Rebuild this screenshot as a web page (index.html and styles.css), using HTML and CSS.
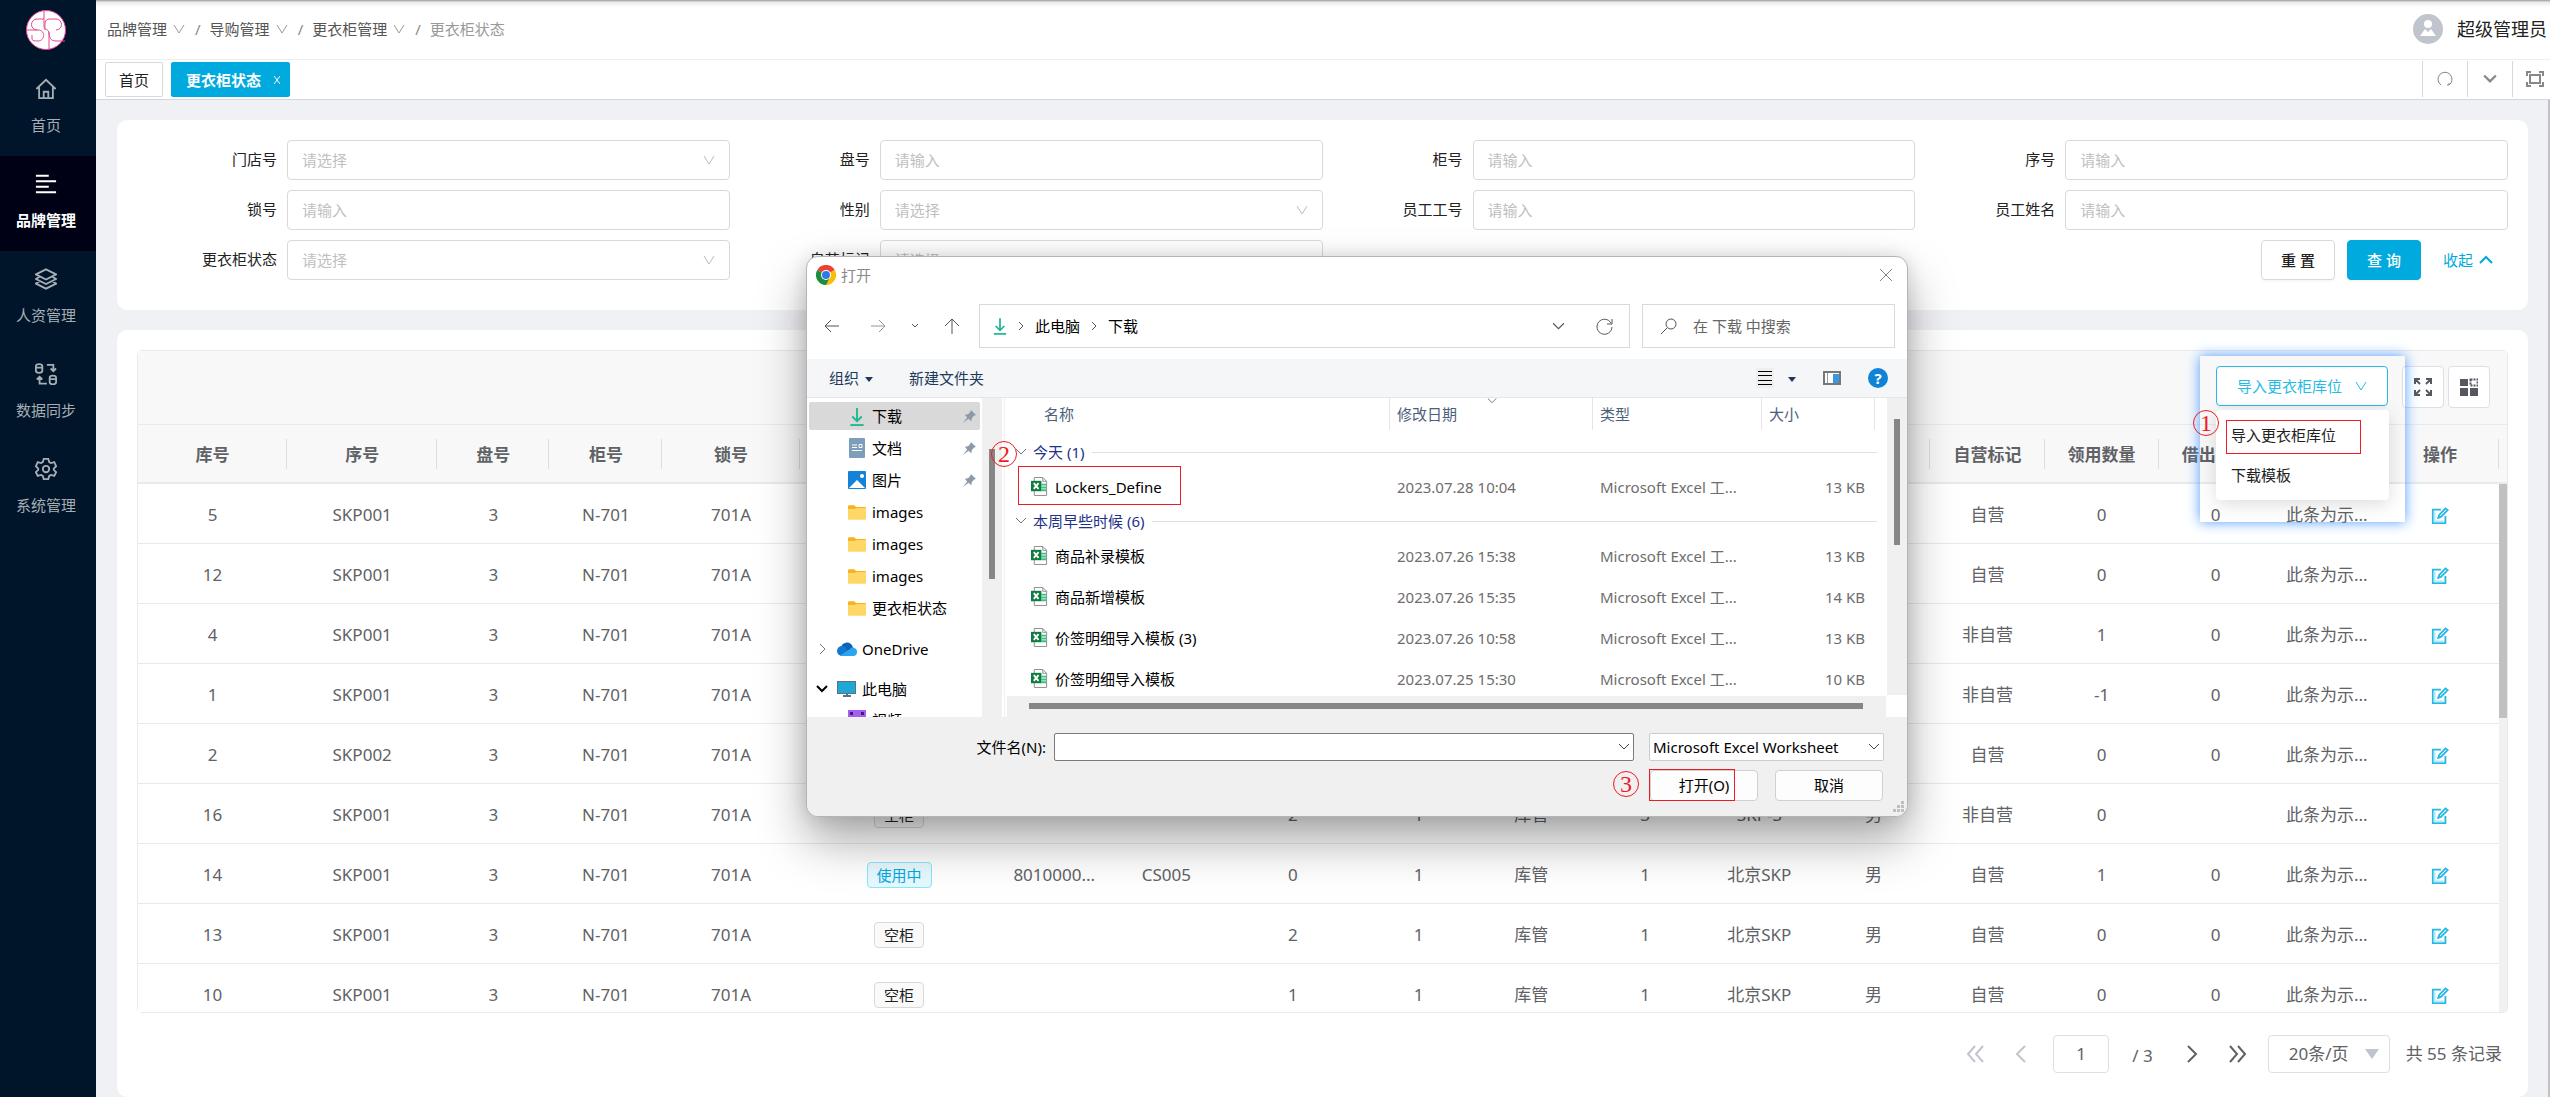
FILE: index.html
```html
<!DOCTYPE html>
<html lang="zh-CN">
<head>
  <meta charset="UTF-8" />
  <meta name="viewport" content="width=device-width, initial-scale=1.0" />
  <title>更衣柜状态</title>
  <link rel="stylesheet" href="styles.css">
</head>
<body>
  <!-- shared icons -->
  <svg class="sprite" aria-hidden="true">
    <symbol id="i-down" viewBox="0 0 12 12"><path d="M1 2l5 8 5-8" /></symbol>
    <symbol id="i-chev" viewBox="0 0 12 12"><path d="M1 3l5 5 5-5" /></symbol>
    <symbol id="i-right" viewBox="0 0 12 12"><path d="M4 1l5 5-5 5" /></symbol>
    <symbol id="i-edit" viewBox="0 0 20 20">
      <path d="M11 3H2v15h14v-8" /><path class="soft" d="M4 5v11h10" /><path d="M8 12l1-3 7-7.500 2.500 2-7.500 7.500z" />
    </symbol>
    <symbol id="i-pin" viewBox="0 0 14 14"><path d="M8.500 0L14 5.500l-2 .5-2.500 2.500-.5 3.500-3-2.700L0 14l4.500-6L2 5l3.500-.5L8 2z" /></symbol>
    <symbol id="i-download" viewBox="0 0 16 20"><path d="M8 1v14M3 10l5 5 5-5" /><path class="base" d="M1 19h14" /></symbol>
    <symbol id="i-folder" viewBox="0 0 20 16">
      <path fill="#f5b41f" d="M1 0h6l2 2h10a1 1 0 0 1 1 1v4H0V1a1 1 0 0 1 1-1z" />
      <path fill="#ffd766" d="M0 4h7l2-1h11v12a1 1 0 0 1-1 1H1a1 1 0 0 1-1-1z" />
    </symbol>
    <symbol id="i-excel" viewBox="0 0 18 20">
      <path fill="#fff" stroke="#8a8a8a" d="M3.500.5h9l4 4v15h-13z" /><path fill="none" stroke="#8a8a8a" d="M12.500.5v4h4" />
      <path stroke="#35c481" stroke-width="2" d="M11 8h5M11 11h5M11 14h5" />
      <path fill="#107c41" d="M0 4h11v11H0z" /><path stroke="#fff" stroke-width="2" d="M3 6.500l5 6M8 6.500l-5 6" />
    </symbol>
  </svg>

  <div class="app">
    <nav class="sidebar">
      <a class="logo" href="#">
        <svg width="40" height="40" viewBox="0 0 40 40" fill="none" stroke="#e2488c" stroke-width="1">
          <circle cx="20" cy="20" r="19.500" fill="#fff" />
          <path d="M18 0v16M18 9h-7a5 5 0 0 0 0 11M0 20h12c8 0 7 11 0 11s-6-1-6-6M19 20c0-6-1-11 5-11h6a5 5 0 0 1 0 11M18 16c0 5 5 2 5 8v16M23 22c0 6 2 9 7 9h9" />
        </svg>
      </a>
      <a class="menu-item" href="#">
        <svg viewBox="0 0 24 24"><path d="M1.500 12L12 2l10.500 10M4.500 10v12h15V10M9.500 22v-7h5v7" /></svg>
        <span>首页</span>
      </a>
      <a class="menu-item active" href="#">
        <svg viewBox="0 0 24 24"><path d="M1 3h14M1 9h22M1 15h14M1 21h22" /></svg>
        <span>品牌管理</span>
      </a>
      <a class="menu-item" href="#">
        <svg viewBox="0 0 24 24"><path d="M12 1.500L23 7l-11 5.500L1 7zM5 9.500L1 12l11 5.500L23 12l-4-2.500M5 14.500L1 17l11 5.500L23 17l-4-2.500" /></svg>
        <span>人资管理</span>
      </a>
      <a class="menu-item" href="#">
        <svg viewBox="0 0 24 24"><path d="M1 3.500c0-3 7-3 7 0v5c0 3-7 3-7 0zM1 5h7M16 16c0-3 7-3 7 0v5c0 3-7 3-7 0zM16 17.500h7M13 2h7v7M17 6l3 3 3-3M13 22.500H5V15M2 18l3-3 3 3" /></svg>
        <span>数据同步</span>
      </a>
      <a class="menu-item" href="#">
        <svg viewBox="0 0 24 24"><path d="M9.500 1h5l1 3.500 2 1 3.500-1L23 9l-2.500 2.500v1.500L23 15.500 21 19.500l-3.500-1-2 1-1 3.500h-5l-1-3.500-2-1-3.500 1L1 15.500 3.500 13v-1.500L1 9l2-4.500 3.500 1 2-1z" /><circle cx="12" cy="12" r="3.500" /></svg>
        <span>系统管理</span>
      </a>
    </nav>

    <div class="page">
      <header class="topbar">
        <div class="crumbs">
          <a href="#">品牌管理 <svg class="line"><use href="#i-down" /></svg></a><i>/</i>
          <a href="#">导购管理 <svg class="line"><use href="#i-down" /></svg></a><i>/</i>
          <a href="#">更衣柜管理 <svg class="line"><use href="#i-down" /></svg></a><i>/</i>
          <span>更衣柜状态</span>
        </div>
        <div class="user">
          <svg width="30" height="30" viewBox="0 0 30 30"><circle cx="15" cy="15" r="15" fill="#c0c4cc" /><circle cx="15" cy="10" r="4" fill="#fff" /><path fill="#fff" d="M7 22l5-7 3 3 3-3 5 7z" /></svg>
          <span>超级管理员</span>
        </div>
      </header>

      <div class="tabs">
        <a class="tab" href="#">首页</a>
        <a class="tab current" href="#">更衣柜状态 <svg class="line" viewBox="0 0 8 8"><path d="M1 0l6 8M7 0L1 8" /></svg></a>
        <div class="tab-tools">
          <button type="button" aria-label="刷新"><svg width="16" height="16" viewBox="0 0 16 16"><path d="M4 14a7 7 0 1 1 8 0v-2M12 14h-2" /></svg></button>
          <button type="button" aria-label="更多"><svg class="bold" width="14" height="14"><use href="#i-chev" /></svg></button>
          <button type="button" aria-label="全屏"><svg class="bold" width="18" height="16" viewBox="0 0 18 16"><path d="M1 5V1h4M13 1h4v4M17 11v4h-4M5 15H1v-4M4 4h10v8H4z" /></svg></button>
        </div>
      </div>

      <main class="content">
        <form class="card filters">
          <label for="store">门店号</label>
          <div class="field"><select id="store"><option>请选择</option></select><svg class="line"><use href="#i-down" /></svg></div>
          <label for="plate">盘号</label>
          <div class="field"><input id="plate" type="text" placeholder="请输入"></div>
          <label for="cabinet">柜号</label>
          <div class="field"><input id="cabinet" type="text" placeholder="请输入"></div>
          <label for="serial">序号</label>
          <div class="field"><input id="serial" type="text" placeholder="请输入"></div>

          <label for="lock">锁号</label>
          <div class="field"><input id="lock" type="text" placeholder="请输入"></div>
          <label for="sex">性别</label>
          <div class="field"><select id="sex"><option>请选择</option></select><svg class="line"><use href="#i-down" /></svg></div>
          <label for="empno">员工工号</label>
          <div class="field"><input id="empno" type="text" placeholder="请输入"></div>
          <label for="empname">员工姓名</label>
          <div class="field"><input id="empname" type="text" placeholder="请输入"></div>

          <label for="state">更衣柜状态</label>
          <div class="field"><select id="state"><option>请选择</option></select><svg class="line"><use href="#i-down" /></svg></div>
          <label for="self">自营标记</label>
          <div class="field"><select id="self"><option>请选择</option></select><svg class="line"><use href="#i-down" /></svg></div>
          <div class="actions">
            <button type="button" class="btn">重 置</button>
            <button type="button" class="btn primary">查 询</button>
            <a href="#">收起 <svg width="14" height="12" viewBox="0 0 14 12"><path d="M1 9l6-6 6 6" /></svg></a>
          </div>
        </form>

        <section class="card list">
          <div class="grid">
            <div class="toolbar">
              <div class="import">
                <button type="button" class="btn outline">导入更衣柜库位 <svg class="line"><use href="#i-down" /></svg></button>
                <div class="import-menu">
                  <a href="#">导入更衣柜库位</a>
                  <a href="#">下载模板</a>
                </div>
                <div class="spotlight"></div>
                <div class="mark import-mark"></div>
                <span class="step import-step">1</span>
              </div>
              <button type="button" class="tool" aria-label="最大化"><svg width="18" height="18" viewBox="0 0 18 18"><path fill="none" d="M1 6V1h5M1 1l5 5M12 1h5v5M17 1l-5 5M1 12v5h5M1 17l5-5M17 12v5h-5M17 17l-5-5" /></svg></button>
              <button type="button" class="tool" aria-label="列设置"><svg width="18" height="18" viewBox="0 0 18 18"><path stroke="none" fill="#55585e" d="M0 1h8v7H0zM0 10h8v8H0zM10 10h8v8h-8z" /><path fill="none" stroke-dasharray="2 1" d="M10.500 1.500h7v6h-7z" /></svg></button>
            </div>
            <div class="table-area">
              <table class="data">
                <colgroup id="cols"></colgroup>
                <thead><tr id="head"></tr></thead>
                <tbody id="rows"></tbody>
              </table>
              <div class="table-scroll"><div class="thumb"></div></div>
            </div>
          </div>
          <div class="pager">
            <button type="button" class="off" aria-label="首页"><svg width="18" height="18" viewBox="0 0 18 18"><path d="M9 1L2 9l7 8M17 1l-7 8 7 8" /></svg></button>
            <button type="button" class="off" aria-label="上一页"><svg width="18" height="18" viewBox="0 0 18 18"><path d="M13 1L5 9l8 8" /></svg></button>
            <input type="text" value="1" aria-label="页码">
            <span class="total">/ 3</span>
            <button type="button" aria-label="下一页"><svg width="18" height="18" viewBox="0 0 18 18"><path d="M5 1l8 8-8 8" /></svg></button>
            <button type="button" aria-label="末页"><svg width="18" height="18" viewBox="0 0 18 18"><path d="M1 1l7 8-7 8M9 1l7 8-7 8" /></svg></button>
            <div class="size"><select aria-label="每页条数"><option>20条/页</option></select><svg width="14" height="10" viewBox="0 0 14 10"><path d="M0 0h14L7 10z" /></svg></div>
            <span class="count">共 55 条记录</span>
          </div>
        </section>
        <div class="page-scroll"></div>
      </main>
    </div>
  </div>

  <div class="dialog" role="dialog" aria-label="打开">
    <div class="titlebar">
      <svg width="20" height="20" viewBox="0 0 20 20">
        <path fill="#ea4335" d="M10 10L1.300 5a10 10 0 0 1 17.400 0z" /><path fill="#fbbc05" d="M10 10l8.700-5A10 10 0 0 1 10 20z" /><path fill="#1e8e3e" d="M10 20A10 10 0 0 1 1.300 5L10 10l3 4z" />
        <circle cx="10" cy="10" r="5" fill="#fff" /><circle cx="10" cy="10" r="4" fill="#2a7bea" />
      </svg>
      <span>打开</span>
      <button type="button" aria-label="关闭"><svg width="12" height="12" viewBox="0 0 12 12"><path d="M0 0l12 12M12 0L0 12" /></svg></button>
    </div>

    <div class="navbar">
      <div class="arrows">
        <button type="button" class="back" aria-label="后退"><svg width="16" height="16" viewBox="0 0 16 16"><path d="M15 8H1M7 2L1 8l6 6" /></svg></button>
        <button type="button" class="dim" aria-label="前进"><svg width="16" height="16" viewBox="0 0 16 16"><path d="M1 8h14M9 2l6 6-6 6" /></svg></button>
        <button type="button" aria-label="历史"><svg width="8" height="8" viewBox="0 0 8 8"><path d="M1 2l3 3 3-3" /></svg></button>
        <button type="button" aria-label="上级"><svg width="16" height="16" viewBox="0 0 16 16"><path d="M8 16V1M1 8l7-7 7 7" /></svg></button>
      </div>
      <div class="address">
        <svg class="dl" width="14" height="20"><use href="#i-download" /></svg>
        <svg width="8" height="8" viewBox="0 0 8 8"><path d="M2 0l4 4-4 4" /></svg><span>此电脑</span>
        <svg width="8" height="8" viewBox="0 0 8 8"><path d="M2 0l4 4-4 4" /></svg><span>下载</span>
        <button type="button" class="push" aria-label="展开"><svg width="13" height="13"><use href="#i-chev" /></svg></button>
        <button type="button" aria-label="刷新"><svg width="17" height="17" viewBox="0 0 17 17"><path d="M15 5a7.500 7.500 0 1 0 1 4M16 1v5h-5" /></svg></button>
      </div>
      <div class="search">
        <svg width="17" height="17" viewBox="0 0 17 17"><circle cx="11" cy="6" r="5" /><path d="M7 10l-6 6" /></svg>
        <input type="text" placeholder="在 下载 中搜索" aria-label="搜索">
      </div>
    </div>

    <div class="cmdbar">
      <button type="button">组织 <i class="caret"></i></button>
      <button type="button">新建文件夹</button>
      <div class="views">
        <button type="button" class="lines" aria-label="视图"><svg width="14" height="14" viewBox="0 0 14 14"><path d="M0 .5h14M0 4.500h14M0 9.500h14M0 13.500h14" /></svg></button>
        <button type="button" aria-label="更多视图"><i class="caret"></i></button>
        <button type="button" aria-label="预览"><svg width="18" height="14" viewBox="0 0 18 14"><path fill="#fff" stroke="#777" stroke-width="2" d="M1 1h16v12H1z" /><path stroke="#999" d="M4.500 2v10" /><path fill="#3b97e0" d="M10 3h6v9h-6z" /></svg></button>
        <button type="button" class="help" aria-label="帮助">?</button>
      </div>
    </div>

    <div class="explorer">
      <ul class="tree">
        <li class="sub on"><svg class="dl" width="14" height="19"><use href="#i-download" /></svg>下载<svg class="pin"><use href="#i-pin" /></svg></li>
        <li class="sub"><svg width="16" height="20" viewBox="0 0 16 20"><rect width="16" height="20" rx="1" fill="#7e9dbd" /><path fill="none" stroke="#fff" stroke-width="1" d="M3 7h5M3 9.500h5M3 12.500h10M10 6.500h3v3h-3z" /></svg>文档<svg class="pin"><use href="#i-pin" /></svg></li>
        <li class="sub"><svg width="18" height="18" viewBox="0 0 18 18"><rect width="18" height="18" rx="1" fill="#1482d6" /><path fill="#fff" d="M1 17l8-8 8 8z" /><circle cx="14" cy="5" r="2" fill="#fff" /></svg>图片<svg class="pin"><use href="#i-pin" /></svg></li>
        <li class="sub"><svg width="18" height="15"><use href="#i-folder" /></svg>images</li>
        <li class="sub"><svg width="18" height="15"><use href="#i-folder" /></svg>images</li>
        <li class="sub"><svg width="18" height="15"><use href="#i-folder" /></svg>images</li>
        <li class="sub"><svg width="18" height="15"><use href="#i-folder" /></svg>更衣柜状态</li>
        <li class="root"><svg class="tw" width="12" height="12"><use href="#i-right" /></svg><svg width="20" height="14" viewBox="0 0 20 14"><path fill="#0a64b8" d="M4 7a6 6 0 0 1 12-1l-6 5z" /><circle cx="5" cy="9" r="5" fill="#1478d0" /><path fill="#2ba5ee" d="M3 13.500L13 7a4 4 0 0 1 7 3 4 4 0 0 1-4 4H5z" /></svg>OneDrive</li>
        <li class="root"><svg class="tw dark" width="12" height="12"><use href="#i-chev" /></svg><svg width="20" height="16" viewBox="0 0 20 16"><rect x=".5" y=".5" width="18" height="12" fill="#1fa8d2" stroke="#607080" /><path stroke="#607080" stroke-width="2" d="M6 15h8M10 13v2" /></svg>此电脑</li>
        <li class="sub last"><svg width="18" height="18" viewBox="0 0 18 18"><rect width="18" height="18" fill="#a45ff0" /><path fill="#3e1d78" d="M2 2h3v3H2zM13 2h3v3h-3z" /></svg>视频</li>
      </ul>
      <div class="vbar tree-bar"><div class="thumb"></div></div>
      <div class="files">
        <div class="files-view">
          <table>
            <colgroup><col class="c-name"><col class="c-date"><col class="c-type"><col class="c-size"><col></colgroup>
            <thead><tr><th>名称</th><th>修改日期<svg class="line sort"><use href="#i-chev" /></svg></th><th>类型</th><th>大小</th><th></th></tr></thead>
            <tbody id="files"></tbody>
          </table>
          <div class="vbar file-bar"><div class="thumb"></div></div>
        </div>
        <div class="hbar"><div class="thumb"></div></div>
      </div>
    </div>

    <div class="footer">
      <label for="filename">文件名(N):</label>
      <div class="field name"><input id="filename" type="text"><svg class="line"><use href="#i-chev" /></svg></div>
      <div class="field type"><select aria-label="文件类型"><option>Microsoft Excel Worksheet</option></select><svg class="line"><use href="#i-chev" /></svg></div>
      <div class="confirm">
        <button type="button">打开(O)</button>
        <button type="button">取消</button>
      </div>
    </div>
    <svg class="grip" width="12" height="12" viewBox="0 0 12 12"><path d="M9 0h3v3H9zM5 4h3v3H5zM9 4h3v3H9zM1 8h3v3H1zM5 8h3v3H5zM9 8h3v3H9z" /></svg>

    <div class="mark file-mark"></div>
    <span class="step file-step">2</span>
    <div class="mark open-mark"></div>
    <span class="step open-step">3</span>
  </div>

  <script>
    const columns = [
      ["库号", 149], ["序号", 150], ["盘号", 112], ["柜号", 113], ["锁号", 137],
      ["更衣柜状态", 199], ["员工工号", 111], ["员工姓名", 113], ["钥匙数量", 140], ["备用数量", 111],
      ["管理部门", 114], ["楼层", 114], ["门店", 114], ["性别", 114], ["自营标记", 114],
      ["领用数量", 114], ["借出数量", 114], ["备注", 108], ["操作", 118]
    ];
    const free = '<span class="tag">空柜</span>';
    const used = '<span class="tag used">使用中</span>';
    const note = "此条为示...";
    const lockers = [
      [5, "SKP001", free, "", "", 2, 1, "北京SKP", "自营", 0, 0],
      [12, "SKP001", free, "", "", 2, 1, "北京SKP", "自营", 0, 0],
      [4, "SKP001", free, "", "", 2, 1, "北京SKP", "非自营", 1, 0],
      [1, "SKP001", free, "", "", 2, 1, "北京SKP", "非自营", -1, 0],
      [2, "SKP002", free, "", "", 2, 1, "北京SKP", "自营", 0, 0],
      [16, "SKP001", free, "", "", 2, 3, "SKP-S", "非自营", 0, ""],
      [14, "SKP001", used, "8010000...", "CS005", 0, 1, "北京SKP", "自营", 1, 0],
      [13, "SKP001", free, "", "", 2, 1, "北京SKP", "自营", 0, 0],
      [10, "SKP001", free, "", "", 1, 1, "北京SKP", "自营", 0, 0]
    ];
    const edit = '<button type="button" class="edit" aria-label="编辑"><svg width="18" height="18"><use href="#i-edit" /></svg></button>';

    document.getElementById("cols").innerHTML = columns.map(c => `<col style="width:${c[1]}px">`).join("");
    document.getElementById("head").innerHTML = columns.map(c => `<th>${c[0]}</th>`).join("");
    document.getElementById("rows").innerHTML = lockers.map(r => {
      const cells = [r[0], r[1], 3, "N-701", "701A", r[2], r[3], r[4], r[5], 1, "库管", r[6], r[7], "男", r[8], r[9], r[10], note, edit];
      return `<tr>${cells.map(c => `<td>${c}</td>`).join("")}</tr>`;
    }).join("");

    const groups = [
      { name: "今天 (1)", files: [["Lockers_Define", "2023.07.28 10:04", 13]] },
      { name: "本周早些时候 (6)", files: [
        ["商品补录模板", "2023.07.26 15:38", 13],
        ["商品新增模板", "2023.07.26 15:35", 14],
        ["价签明细导入模板 (3)", "2023.07.26 10:58", 13],
        ["价签明细导入模板", "2023.07.25 15:30", 10]
      ] }
    ];
    document.getElementById("files").innerHTML = groups.map(g => `
      <tr class="group"><td colspan="5"><div><svg class="line"><use href="#i-chev" /></svg>${g.name}</div></td></tr>
      ${g.files.map(f => `
        <tr>
          <td><div class="fname"><svg width="17" height="19"><use href="#i-excel" /></svg>${f[0]}</div></td>
          <td>${f[1]}</td><td>Microsoft Excel 工...</td><td class="kb">${f[2]} KB</td><td></td>
        </tr>`).join("")}`).join("");
  </script>
</body>
</html>
```
FILE: styles.css
```css
* { box-sizing: border-box; }
body { margin: 0; font-family: "Noto Sans", "Noto Sans CJK SC", sans-serif; font-size: 15px; line-height: 20px; color: #222; background: #f0f1f5; overflow: hidden; }
a { color: inherit; text-decoration: none; }
button, input, select { font: inherit; color: inherit; margin: 0; }
button { border: none; background: none; padding: 0; cursor: pointer; }
select { appearance: none; }
i { font-style: normal; }
svg { flex: none; }
.sprite { position: absolute; width: 0; height: 0; }
.line { width: 12px; height: 12px; fill: none; stroke: currentColor; stroke-width: 1; }

/* layout */
.app { display: flex; height: 100vh; }
.page { flex: 1; min-width: 0; display: flex; flex-direction: column; }

/* sidebar */
.sidebar { width: 96px; flex: none; padding-right: 4px; background: #001529; color: #a6adb4; }
.logo { display: flex; justify-content: center; height: 61px; padding-top: 10px; }
.menu-item { display: flex; flex-direction: column; align-items: center; height: 95px; margin-right: -4px; padding: 17px 4px 0 0; gap: 15px; }
.menu-item svg { width: 22px; height: 22px; fill: none; stroke: currentColor; stroke-width: 2; }
.menu-item.active { background: #000115; color: #fff; font-weight: bold; }

/* top bar */
.topbar { display: flex; justify-content: space-between; align-items: center; height: 60px; padding: 0 3px 2px 11px; border-bottom: 1px solid #eee; background: linear-gradient(#999, #e8e8e8 2px, #fff 7px); }
.crumbs { display: flex; align-items: center; color: #555; }
.crumbs a { display: flex; align-items: center; gap: 6px; }
.crumbs i { margin: 0 9px 0 10px; color: #888; }
.crumbs span, .crumbs svg { color: #999; }
.user { display: flex; align-items: center; gap: 14px; font-size: 18px; line-height: 26px; }

/* tabs */
.tabs { display: flex; align-items: flex-end; height: 40px; padding: 0 0 2px 9px; gap: 8px; background: #fff; border-bottom: 1px solid #d4d6dc; }
.tab { display: flex; align-items: center; height: 35px; padding: 0 13px; border: 1px solid #d9d9d9; border-radius: 2px; }
.tab.current { padding: 0 8px 0 14px; gap: 12px; background: #00a9de; border-color: #00a9de; color: #fff; font-weight: bold; }
.tab .line { width: 8px; height: 8px; }
.tab-tools { display: flex; margin-left: auto; margin-right: -7px; }
.tab-tools button { display: flex; align-items: center; justify-content: center; width: 45px; height: 36px; border-left: 1px solid #d9d9d9; }
.tab-tools svg { fill: none; stroke: #888; stroke-width: 1; }
.tab-tools .bold { stroke-width: 2; }

.content { flex: 1; min-height: 0; display: flex; flex-direction: column; gap: 20px; padding: 20px 22px 0 21px; position: relative; }
.card { background: #fff; border-radius: 10px; padding: 20px; }
.page-scroll { position: absolute; top: 0; right: 0; bottom: 0; width: 2px; background: #c1c1c6; }

/* filters */
.filters { display: grid; grid-template-columns: repeat(4, 140px 1fr); gap: 10px 0; padding-bottom: 30px; }
.filters label { line-height: 38px; text-align: right; }
.field { position: relative; }
.field svg { position: absolute; right: 15px; top: 14px; color: #bbb; pointer-events: none; }
.filters .field { padding-left: 10px; }
.filters .field input, .filters .field select { display: block; width: 100%; height: 40px; padding: 0 14px; border: 1px solid #d9d9d9; border-radius: 4px; background: #fff; color: #bfbfbf; }
.filters ::placeholder { color: #bfbfbf; }
.actions { grid-column: 5 / -1; display: flex; justify-content: flex-end; align-items: center; gap: 12px; padding-right: 15px; }
.actions a { display: flex; align-items: center; gap: 6px; margin-left: 10px; color: #00a9de; }
.actions a svg { fill: none; stroke: currentColor; stroke-width: 2; }
.btn { width: 74px; height: 40px; border: 1px solid #d9d9d9; border-radius: 4px; background: #fff; font-weight: 500; box-shadow: 0 2px 2px rgba(0,0,0,0.03); }
.btn.primary { background: #00a9de; border-color: #00a9de; color: #fff; }

/* locker table */
.list { flex: 1; min-height: 0; display: flex; flex-direction: column; padding-bottom: 0; }
.grid { flex: 1; min-height: 0; display: flex; flex-direction: column; border: 1px solid #e8eaec; border-radius: 5px; }
.toolbar { display: flex; gap: 4px; height: 74px; padding: 15px 17px; background: #f8f8f9; border-bottom: 1px solid #e8eaec; }
.import { position: relative; margin-left: auto; margin-right: 10px; z-index: 2; }
.btn.outline { display: flex; align-items: center; justify-content: center; gap: 13px; width: 172px; border-color: #26bbe5; color: #26bbe5; font-weight: normal; }
.import-menu { position: absolute; top: 44px; left: 0; width: 173px; height: 90px; padding: 5px 0 0 15px; border-radius: 4px; background: #fff; box-shadow: 0 4px 18px rgba(0,0,0,0.14); }
.import-menu a { display: block; line-height: 40px; }
.spotlight { position: absolute; top: -10px; left: -16px; width: 205px; height: 166px; box-shadow: 0 0 12px rgba(60,145,255,0.9); pointer-events: none; }
.tool { display: flex; align-items: center; justify-content: center; width: 42px; height: 42px; border: 1px solid #dcdfe6; border-radius: 4px; background: #fff; }
.tool svg { stroke: #55585e; stroke-width: 2; }
.table-area { flex: 1; min-height: 0; display: flex; overflow: hidden; background: linear-gradient(#f8f8f9 57px, #e8eaec 57px, #e8eaec 59px, #fff 59px); }
.data { flex: 1; height: max-content; table-layout: fixed; width: 100%; border-collapse: separate; border-spacing: 0; font-size: 17px; color: #606266; text-align: center; }
.data th { position: relative; height: 59px; padding: 2px 0 0; background: #f8f8f9; border-bottom: 2px solid #e8eaec; font-weight: bold; }
.data th::after { content: ""; position: absolute; right: 0; top: 14px; width: 1px; height: 30px; background: #dcdee2; }
.data td { height: 60px; padding: 2px 0 0; border-bottom: 1px solid #e8eaec; }
.tag { display: inline-block; padding: 0 9px; border: 1px solid #d9d9d9; border-radius: 4px; background: #fafafa; color: #222; font-size: 15px; line-height: 24px; }
.tag.used { border-color: #87e8fa; background: #e6f9ff; color: #00a9de; }
.edit { vertical-align: middle; }
.edit svg { display: block; fill: none; stroke: #26b7e3; stroke-width: 2; }
.soft { stroke: #b5e8f7; }
.table-scroll { width: 8px; margin-top: 59px; background: #f1f1f1; }
.table-scroll .thumb { height: 234px; background: #c1c1c1; }

/* pager */
.pager { display: flex; align-items: center; height: 84px; padding: 0 6px 3px 0; justify-content: flex-end; font-size: 17px; color: #606266; }
.pager button { display: flex; justify-content: center; width: 46px; }
.pager svg { fill: none; stroke: #606266; stroke-width: 2; }
.pager .off svg { stroke: #c0c4cc; }
.pager input { width: 56px; height: 38px; margin-left: 9px; border: 1px solid #dcdfe6; border-radius: 4px; text-align: center; }
.total { margin: 4px 16px 0 23px; }
.size { position: relative; margin: 0 16px 0 7px; }
.size select { display: block; width: 122px; height: 38px; padding: 0 0 0 20px; border: 1px solid #dcdfe6; border-radius: 4px; background: #fff; }
.size svg { position: absolute; right: 11px; top: 14px; fill: #c0c4cc; stroke: none; }

/* file dialog */
.dialog { position: absolute; left: 806px; top: 256px; width: 1102px; height: 561px; border: 1px solid #b4b4b4; border-radius: 12px; background: #fff; color: #000; box-shadow: 0 24px 48px rgba(0,0,0,0.34), 0 0 18px rgba(0,0,0,0.12); z-index: 5; display: flex; flex-direction: column; }
.dialog svg { pointer-events: none; }
.titlebar { display: flex; align-items: center; height: 36px; padding: 0 15px 0 9px; gap: 5px; color: #8a8a8a; }
.titlebar button { margin-left: auto; line-height: 0; }
.titlebar button svg { stroke: #888; }
.navbar { display: flex; height: 66px; padding: 11px 12px; gap: 12px; }
.navbar svg { display: block; fill: none; stroke: #555; stroke-width: 1; }
.arrows { display: flex; align-items: center; gap: 25px; width: 148px; padding-left: 5px; }
.arrows .back { margin-right: 5px; }
.arrows .dim { opacity: 0.6; }
.address { flex: 1; display: flex; align-items: center; gap: 10px; padding: 0 16px 0 13px; border: 1px solid #d9d9d9; }
.address .push { margin-left: auto; margin-right: 21px; }
.dialog .dl { fill: none; stroke: #22b794; stroke-width: 2; }
.search { display: flex; align-items: center; gap: 16px; width: 253px; padding-left: 17px; border: 1px solid #d9d9d9; }
.search input { width: 180px; border: none; outline: none; padding: 0; }
.search ::placeholder { color: #666; }
.cmdbar { display: flex; align-items: center; height: 39px; padding: 0 19px 0 22px; gap: 36px; background: #f4f6f8; border-bottom: 1px solid #e5e7ea; color: #1e395b; }
.caret { display: inline-block; margin-left: 2px; border: 4px solid transparent; border-top: 5px solid #1e395b; border-bottom: none; vertical-align: middle; }
.views { display: flex; align-items: center; margin-left: auto; gap: 12px; }
.views svg { display: block; }
.lines { padding: 3px 2px; background: #efefef; }
.lines svg { stroke: #000; }
.views button:nth-child(2) { margin-right: 15px; }
.help { width: 20px; height: 20px; margin-left: 15px; border-radius: 50%; background: #0f83d8; color: #fff; font-weight: bold; }

.explorer { display: flex; height: 319px; overflow: hidden; }
.tree { width: 175px; margin: 0; padding: 4px 2px 0; list-style: none; white-space: nowrap; }
.tree li { display: flex; align-items: center; height: 32px; }
.tree .sub { padding: 0 4px 0 39px; gap: 6px; }
.tree .sub > svg:first-child { width: 18px; }
.tree .on { height: 28px; margin-bottom: 2px; border-radius: 2px; background: #d9d9d9; }
.tree .pin { width: 13px; height: 13px; margin-left: auto; fill: #8d9aa5; }
.tree .root { gap: 5px; height: 40px; padding-left: 7px; margin-top: 5px; }
.tree .root + .root { margin-top: 0; }
.tree .tw { margin-right: 4px; fill: none; stroke: #777; }
.tree .tw.dark { stroke: #000; stroke-width: 2; }
.tree .last { align-items: flex-start; padding-top: 1px; }
.vbar { width: 20px; background: #f0f0f0; }
.vbar .thumb { width: 6px; margin: 0 auto; background: #868686; }
.tree-bar { margin-right: 2px; }
.tree-bar .thumb { height: 130px; margin-top: 51px; }
.files { flex: 1; padding-left: 2px; border-left: 1px solid #f0f0f0; }
.files-view { display: flex; height: 298px; overflow: hidden; }
.file-bar { flex: none; height: 297px; }
.file-bar .thumb { height: 126px; margin-top: 21px; }
.hbar { height: 21px; margin-right: 21px; padding: 7px 23px 0 22px; background: #f0f0f0; }
.hbar .thumb { height: 6px; background: #868686; }
.files table { flex: 1; height: max-content; table-layout: fixed; border-collapse: separate; border-spacing: 0; color: #6d6d6d; }
.c-name { width: 382px; }
.c-date { width: 203px; }
.c-type { width: 169px; }
.c-size { width: 113px; }
.files th { position: relative; height: 32px; padding: 0 0 0 7px; border-left: 1px solid #e5e5e5; color: #4c607a; font-weight: normal; text-align: left; }
.files th:first-child { padding-left: 37px; border-left: none; }
.sort { position: absolute; left: 97px; top: -2px; width: 10px; height: 10px; }
.files td { height: 41px; padding: 0 0 0 8px; white-space: nowrap; }
.files td.kb { padding: 0 9px 0 0; text-align: right; }
.files .group td { height: 28px; padding: 0 10px 0 8px; color: #1e3287; }
.files .group:first-child td { height: 36px; padding-top: 8px; }
.group div { display: flex; align-items: center; gap: 6px; }
.group div::after { content: ""; flex: 1; height: 1px; margin-left: 2px; background: #e0e0e0; }
.group svg { color: #777; }
.fname { display: flex; align-items: center; gap: 7px; padding-left: 16px; color: #000; }

.footer { flex: 1; display: grid; grid-template-columns: 239px 580px 242px; grid-template-rows: 28px 32px; column-gap: 8px; row-gap: 8px; padding-top: 16px; background: #f0f0f0; border-radius: 0 0 12px 12px; align-items: center; }
.footer label { text-align: right; }
.footer input, .footer select { display: block; width: 100%; height: 28px; padding: 0 3px; border: 1px solid #7a7a7a; border-radius: 2px; background: #fff; }
.footer .type { margin-left: 7px; }
.footer .type select { border-color: #ccc; }
.footer .field svg { right: 4px; top: 8px; color: #444; }
.confirm { grid-column: 3; display: flex; gap: 17px; margin-left: 8px; }
.confirm button { flex: none; width: 108px; height: 31px; border: 1px solid #d0d0d0; border-radius: 4px; background: #fdfdfd; }
.grip { position: absolute; right: 3px; bottom: 3px; fill: #bfbfbf; }

/* guide annotations */
.mark { position: absolute; border: 1px solid #ed1c24; pointer-events: none; }
.step { position: absolute; width: 26px; height: 26px; border: 1px solid #ed1c24; border-radius: 50%; color: #ed1c24; font: 24px/24px "Liberation Serif", serif; text-align: center; }
.import-mark { left: 10px; top: 54px; width: 135px; height: 34px; }
.import-step { left: -23px; top: 44px; }
.file-mark { left: 211px; top: 209px; width: 163px; height: 39px; }
.file-step { left: 184px; top: 184px; }
.open-mark { left: 842px; top: 512px; width: 86px; height: 32px; }
.open-step { left: 806px; top: 514px; }
```
